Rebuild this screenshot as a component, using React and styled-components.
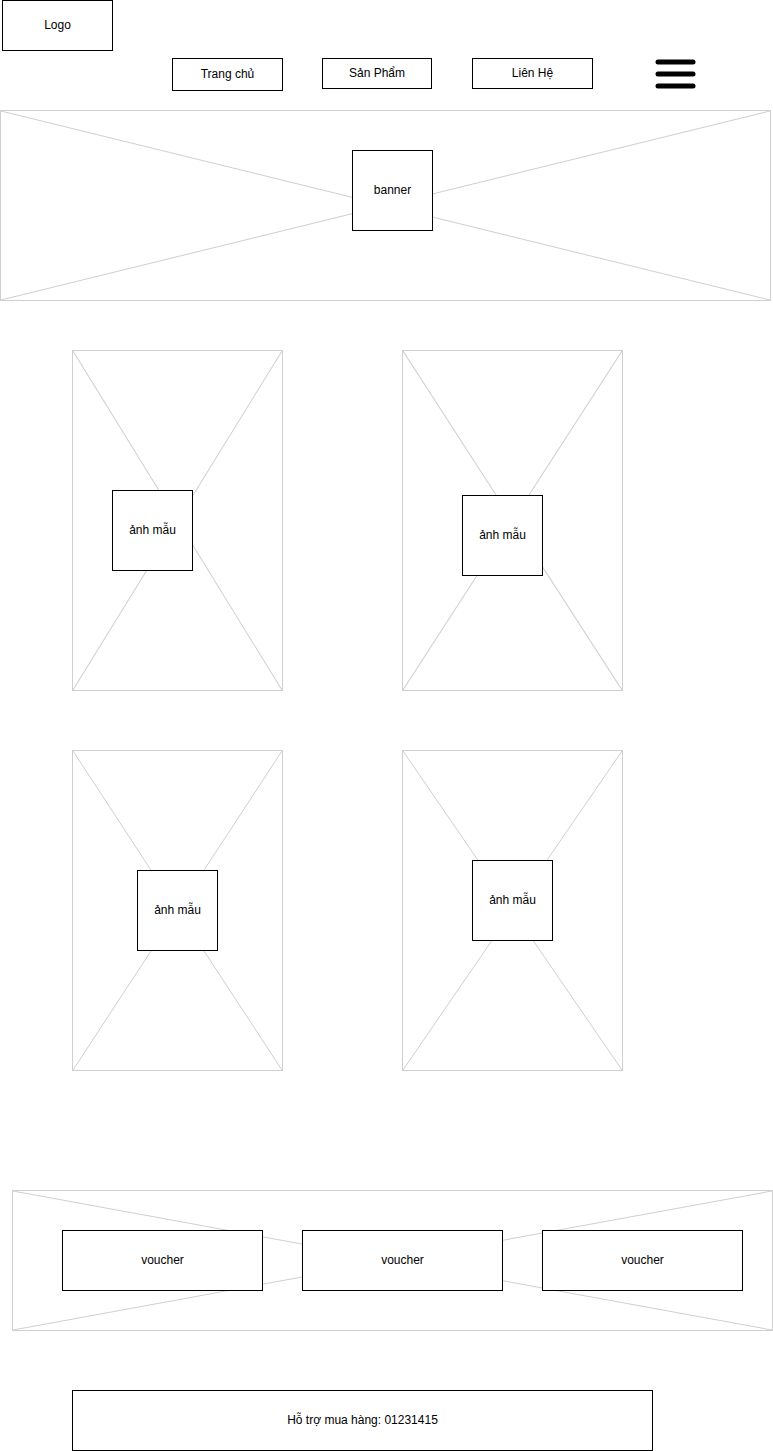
import React from 'react';
import styled, { createGlobalStyle } from 'styled-components';

const Global = createGlobalStyle`
  body {
    margin: 0;
    background: #fff;
    font-family: "Liberation Sans", Arial, sans-serif;
    font-size: 12px;
    color: #000;
  }
`;

const Page = styled.div`
  width: 773px;
  height: 1451px;
  display: flex;
  flex-direction: column;
  align-items: flex-start;
  overflow: hidden;
`;

const Box = styled.div`
  box-sizing: border-box;
  border: 1px solid #000;
  background: #fff;
  display: flex;
  align-items: center;
  justify-content: center;
  padding-bottom: 1px;
  width: ${p => p.w}px;
  height: ${p => p.h}px;
  flex-shrink: 0;
  position: relative;
  z-index: 1;
`;

const Header = styled.header`
  width: 100%;
  height: 110px;
  display: flex;
  flex-direction: column;
`;

const LogoWrap = styled.div`
  margin-left: 2px;
`;

const Nav = styled.nav`
  margin-top: 7px;
  padding-left: 172px;
  display: flex;
  align-items: flex-start;
`;

const NavItem = styled(Box)`
  margin-left: ${p => p.gap || 0}px;
  padding-bottom: 2px;
`;

const Burger = styled.button`
  margin-left: 62px;
  width: 42px;
  height: 32px;
  padding: 0;
  border: none;
  background: none;
  display: flex;
`;

/* image placeholder: gray frame with an X drawn across it */
const Placeholder = styled.div`
  position: relative;
  box-sizing: border-box;
  border: 1px solid #cfcfcf;
  width: ${p => p.w}px;
  height: ${p => p.h}px;
  margin-left: ${p => p.ml || 0}px;
  margin-top: ${p => p.mt || 0}px;
  padding-top: ${p => p.pt || 0}px;
  padding-left: ${p => p.pl || 0}px;
  flex-shrink: 0;
`;

const Cross = styled.svg`
  position: absolute;
  inset: 0;
  width: 100%;
  height: 100%;
  z-index: 0;
`;

const X = () => (
  <Cross viewBox="0 0 100 100" preserveAspectRatio="none">
    <line x1="0" y1="0" x2="100" y2="100" stroke="#cfcfcf" strokeWidth="1" vectorEffect="non-scaling-stroke" />
    <line x1="100" y1="0" x2="0" y2="100" stroke="#cfcfcf" strokeWidth="1" vectorEffect="non-scaling-stroke" />
  </Cross>
);

const CardRow = styled.div`
  display: flex;
  margin-top: ${p => p.mt}px;
  padding-left: 72px;
  gap: 119px;
`;

const VoucherBand = styled(Placeholder)`
  display: flex;
  gap: 39px;
`;

const Footer = styled(Box)`
  margin-top: 59px;
  margin-left: 72px;
`;

const Menu = () => (
  <svg width="42" height="32" viewBox="0 0 42 32">
    <g stroke="#000" strokeWidth="5" strokeLinecap="round">
      <line x1="3" y1="4" x2="38" y2="4" />
      <line x1="3" y1="16" x2="38" y2="16" />
      <line x1="3" y1="28" x2="38" y2="28" />
    </g>
  </svg>
);

const cards = [
  [
    { w: 211, h: 341, x: 40, y: 140 },
    { w: 221, h: 341, x: 60, y: 145 },
  ],
  [
    { w: 211, h: 321, x: 65, y: 120 },
    { w: 221, h: 321, x: 70, y: 110 },
  ],
];

export default function App() {
  return (
    <Page>
      <Global />
      <Header>
        <LogoWrap>
          <Box w={111} h={51}>Logo</Box>
        </LogoWrap>
        <Nav>
          <NavItem w={111} h={33}>Trang chủ</NavItem>
          <NavItem w={110} h={31} gap={39}>Sản Phẩm</NavItem>
          <NavItem w={121} h={31} gap={40}>Liên Hệ</NavItem>
          <Burger aria-label="menu"><Menu /></Burger>
        </Nav>
      </Header>

      <Placeholder w={771} h={191} pt={39} pl={351}>
        <X />
        <Box w={81} h={81}>banner</Box>
      </Placeholder>

      {cards.map((row, i) => (
        <CardRow key={i} mt={i === 0 ? 49 : 59}>
          {row.map((c, j) => (
            <Placeholder key={j} w={c.w} h={c.h} pt={c.y - 1} pl={c.x - 1}>
              <X />
              <Box w={81} h={81}>ảnh mẫu</Box>
            </Placeholder>
          ))}
        </CardRow>
      ))}

      <VoucherBand w={761} h={141} ml={12} mt={119} pt={39} pl={49}>
        <X />
        <Box w={201} h={61}>voucher</Box>
        <Box w={201} h={61}>voucher</Box>
        <Box w={201} h={61}>voucher</Box>
      </VoucherBand>

      <Footer w={581} h={61}>Hỗ trợ mua hàng: 01231415</Footer>
    </Page>
  );
}
